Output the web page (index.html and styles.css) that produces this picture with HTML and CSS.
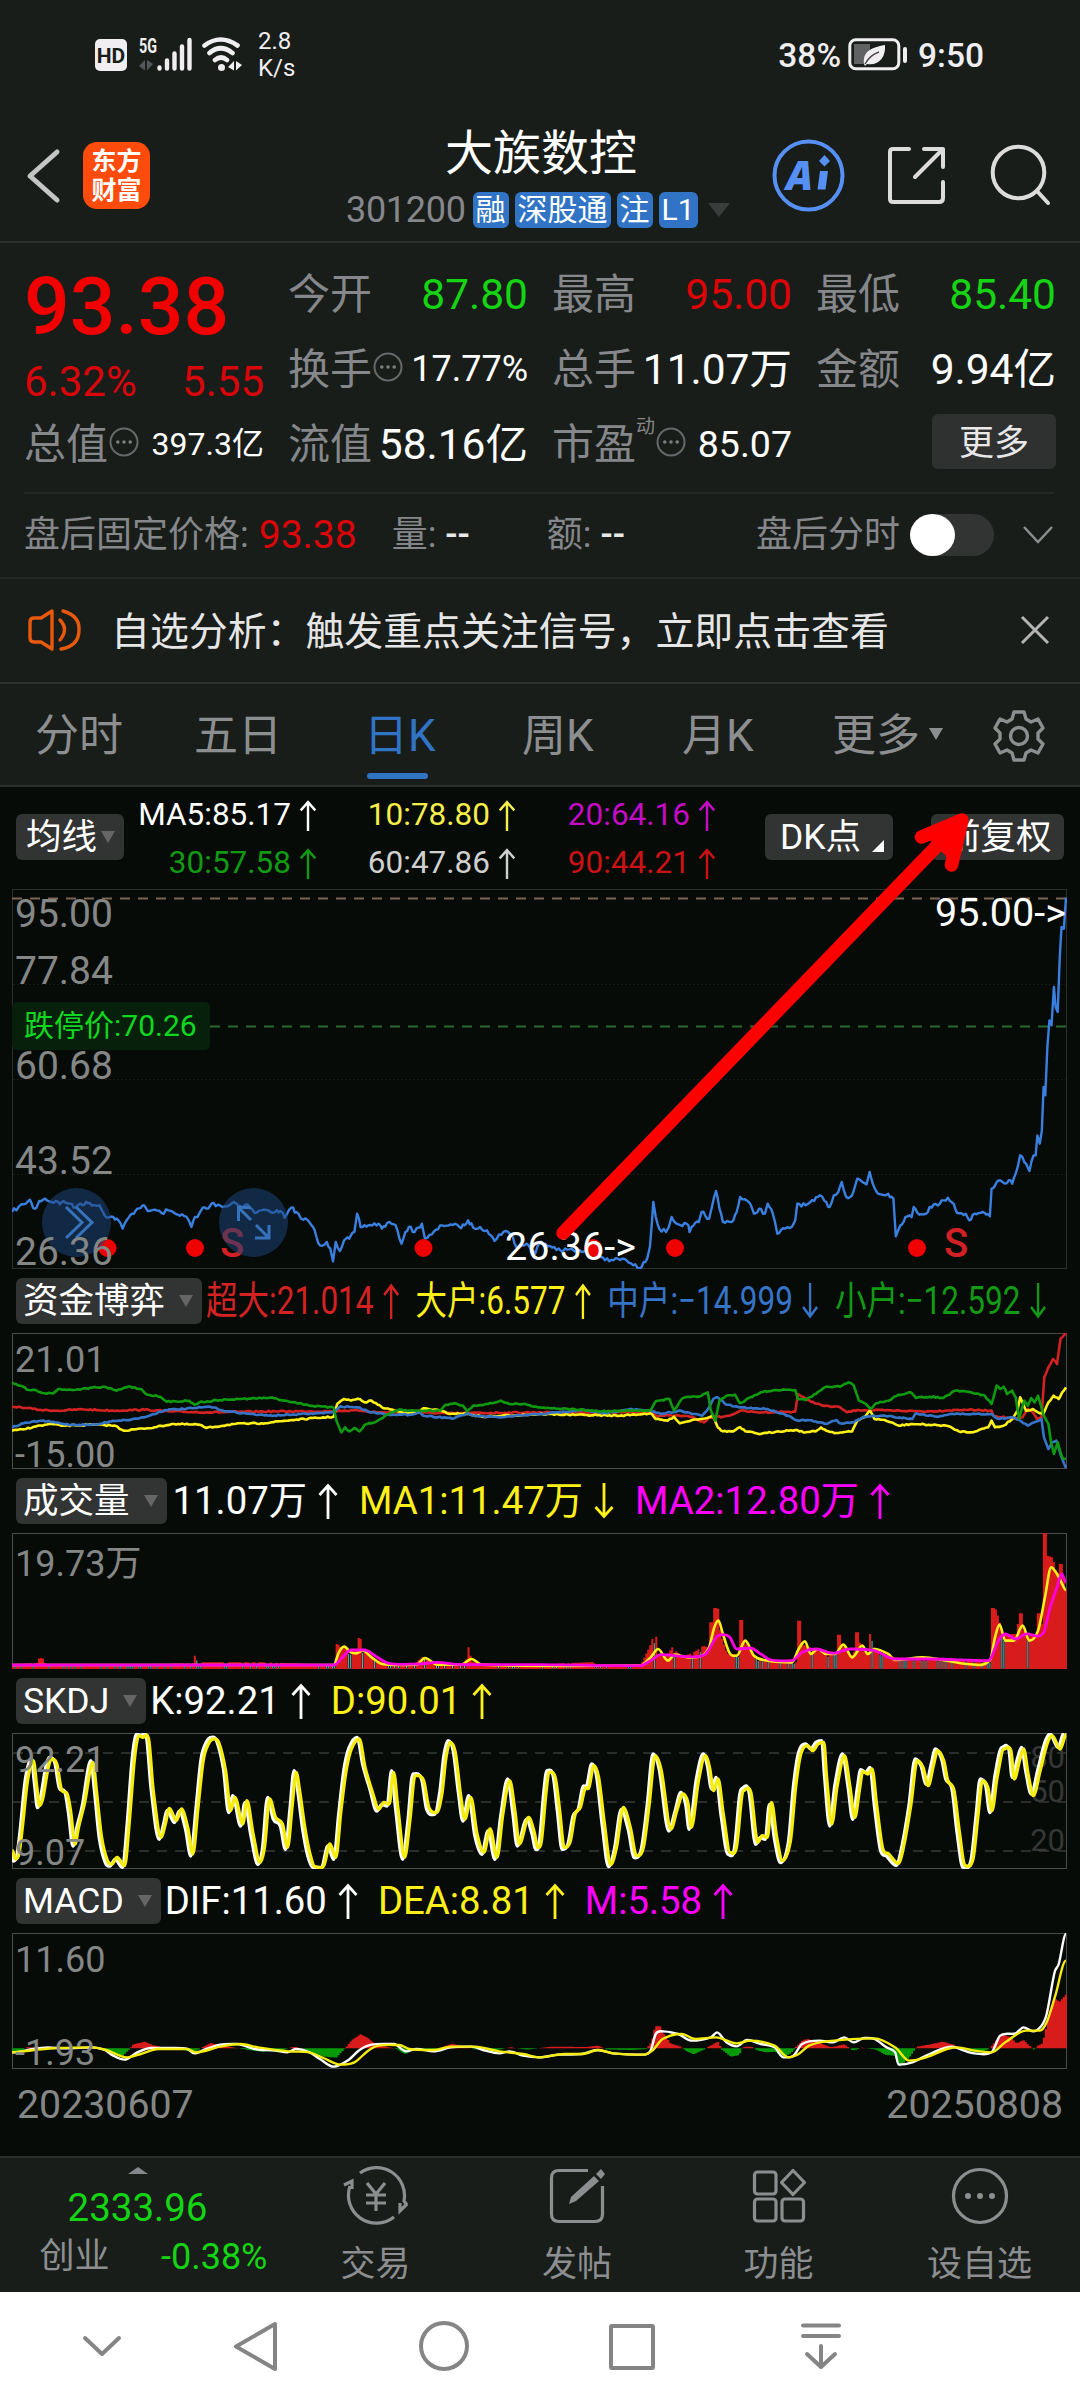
FILE: index.html
```html
<!DOCTYPE html>
<html lang="zh-CN">
<head>
  <meta charset="UTF-8">
  <meta name="viewport" content="width=device-width, initial-scale=1.0">
  <title>大族数控 301200</title>
  <link rel="stylesheet" href="styles.css">
</head>
<body>
  <svg class="defs" width="0" height="0">
    <symbol id="up" viewBox="0 0 20 36"><path d="M10 36V3M1.5 12L10 2.5L18.5 12" fill="none" stroke="currentColor" stroke-width="2.8"/></symbol>
    <symbol id="down" viewBox="0 0 20 36"><path d="M10 0V33M1.5 24L10 33.5L18.5 24" fill="none" stroke="currentColor" stroke-width="2.8"/></symbol>
    <symbol id="info" viewBox="0 0 30 30"><circle cx="15" cy="15" r="13.5" fill="none" stroke="#66686a" stroke-width="2"/><g fill="#7c7e80"><circle cx="8.8" cy="15" r="1.8"/><circle cx="15" cy="15" r="1.8"/><circle cx="21.2" cy="15" r="1.8"/></g></symbol>
  </svg>

  <div class="status-bar">
    <svg class="status-icons" width="158" height="44" viewBox="0 0 158 44">
      <rect x="0" y="6" width="32" height="32" rx="5" fill="#f0eef0"/>
      <text x="16" y="29.5" class="hd">HD</text>
      <text x="44" y="20" class="five-g" textLength="18" lengthAdjust="spacingAndGlyphs">5G</text>
      <path d="M44 33L50 27V37.500ZM52 27V37.500L58 31Z" fill="#55585a"/>
      <g stroke="#f0eef0" stroke-width="4.4" stroke-linecap="round">
        <path d="M64.500 34.500V35.500M72 27.500V35.500M79.500 20.500V35.500M87 13.500V35.500M94.500 7V35.500"/>
      </g>
      <g fill="none" stroke="#f0eef0" stroke-width="4.6" stroke-linecap="round">
        <path d="M109.500 12.500Q125.500 .500 142.500 12.500M114.500 20Q125.500 10.500 137.500 20M120 27Q126 22 132 27"/>
      </g>
      <circle cx="126.500" cy="34.500" r="3.500" fill="#f0eef0"/>
      <path d="M133 34L139 28V37.500ZM141 28V37.500L147 32Z" fill="#f0eef0"/>
    </svg>
    <div class="speed"><span>2.8</span><span>K/s</span></div>
    <div class="status-right">
      <span>38%</span>
      <svg width="60" height="34" viewBox="0 0 60 34">
        <rect x="1.800" y="1.800" width="49" height="29" rx="6" fill="none" stroke="#f0eef0" stroke-width="3"/>
        <rect x="6" y="6" width="16" height="20" fill="#606264"/>
        <path d="M16 26C15 15 20 10 37 7C38 19 31 28 19 26L17 28Z" fill="#f0eef0"/>
        <path d="M17 26Q22 17 31 14" stroke="#4a4c4c" stroke-width="1.500" fill="none"/>
        <rect x="55" y="9" width="4" height="16" rx="2" fill="#f0eef0"/>
      </svg>
      <span>9:50</span>
    </div>
  </div>

  <header class="header">
    <svg class="back" width="36" height="56" viewBox="0 0 36 56"><path d="M32 4L5 28L32 52" fill="none" stroke="#c4c4c4" stroke-width="5" stroke-linecap="round" stroke-linejoin="round"/></svg>
    <div class="logo"><span>东方</span><span>财富</span></div>
    <div class="title">
      <h1>大族数控</h1>
      <div class="code">
        <span>301200</span>
        <b>融</b><b>深股通</b><b>注</b><b>L1</b>
        <i class="tri tri-dark"></i>
      </div>
    </div>
    <svg class="actions" width="282" height="76" viewBox="0 0 282 76">
      <circle cx="38.500" cy="37.500" r="34" fill="none" stroke="#5790f5" stroke-width="4"/>
      <text x="16" y="51.500" class="ai">A</text>
      <path d="M50 33H58L55.500 51.500H47.500ZM54.500 17L60 23L54.500 28.500L49 23Z" fill="#5790f5"/>
      <g fill="none" stroke="#dcdcdc" stroke-width="4" stroke-linecap="round" stroke-linejoin="round">
        <path d="M139 11H123Q120 11 120 14V61Q120 64 123 64H169Q173 64 173 60V44M154 11H173V29M171 13L145 39"/>
        <circle cx="248.500" cy="34.500" r="25.800"/>
        <path d="M267 53L278 65"/>
      </g>
    </svg>
  </header>

  <section class="quote">
    <div class="col">
      <div class="price">93.38</div>
      <div class="change"><span>6.32%</span><span>5.55</span></div>
      <div class="cell"><label>总值</label><svg class="info" width="30" height="30"><use href="#info"/></svg><span class="s32">397.3亿</span></div>
    </div>
    <div class="col">
      <div class="cell"><label>今开</label><span class="green">87.80</span></div>
      <div class="cell"><label>换手</label><svg class="info" width="30" height="30"><use href="#info"/></svg><span class="s36">17.77%</span></div>
      <div class="cell"><label>流值</label><span>58.16亿</span></div>
    </div>
    <div class="col">
      <div class="cell"><label>最高</label><span class="red">95.00</span></div>
      <div class="cell"><label>总手</label><span>11.07万</span></div>
      <div class="cell"><label>市盈</label><sup>动</sup><svg class="info" width="30" height="30"><use href="#info"/></svg><span class="s38">85.07</span></div>
    </div>
    <div class="col">
      <div class="cell"><label>最低</label><span class="green">85.40</span></div>
      <div class="cell"><label>金额</label><span>9.94亿</span></div>
      <div class="cell"><button class="more">更多</button></div>
    </div>
  </section>

  <section class="after-hours">
    <span>盘后固定价格:</span><span class="red fixed">93.38</span>
    <span class="vol">量: <em>--</em></span>
    <span class="amt">额: <em>--</em></span>
    <span class="split">盘后分时</span>
    <div class="toggle"><i></i></div>
    <svg width="32" height="20" viewBox="0 0 32 20"><path d="M2 2L16 17L30 2" fill="none" stroke="#8c8e90" stroke-width="2.500"/></svg>
  </section>

  <section class="notice">
    <svg width="54" height="44" viewBox="0 0 54 44" fill="none" stroke="#e8590c" stroke-width="3.400" stroke-linejoin="round" stroke-linecap="round">
      <path d="M24 3L13 10H6Q2 10 2 14V30Q2 34 6 34H13L24 41Z"/>
      <path d="M32 12Q41 21 32 32M35 3Q52 8 51 22Q51 38 33 41"/>
    </svg>
    <span>自选分析：触发重点关注信号，立即点击查看</span>
    <svg width="32" height="32" viewBox="0 0 32 32"><path d="M3 3L29 29M29 3L3 29" stroke="#b4b4b4" stroke-width="3"/></svg>
  </section>

  <nav class="tabs">
    <span>分时</span><span>五日</span><span class="active">日K</span><span>周K</span><span>月K</span><span>更多<i class="tri tri-tab"></i></span>
    <svg width="54" height="54" viewBox="-27 -27 54 54" fill="none" stroke="#8c8e90" stroke-width="3.400" stroke-linejoin="round">
      <path d="M-5 -24H5L7 -17L12 -14L19 -17L24 -8L19 -3V3L24 8L19 17L12 14L7 17L5 24H-5L-7 17L-12 14L-19 17L-24 8L-19 3V-3L-24 -8L-19 -17L-12 -14L-7 -17Z"/>
      <circle r="8.500"/>
    </svg>
  </nav>

  <main class="charts">
    <div class="ma-row">
      <button class="pick">均线<i class="tri"></i></button>
      <div class="ma-grid">
        <span class="white">MA5:85.17<svg><use href="#up"/></svg></span>
        <span class="yellow2">10:78.80<svg><use href="#up"/></svg></span>
        <span class="purple">20:64.16<svg><use href="#up"/></svg></span>
        <span class="dgreen">30:57.58<svg><use href="#up"/></svg></span>
        <span class="silver">60:47.86<svg><use href="#up"/></svg></span>
        <span class="dred">90:44.21<svg><use href="#up"/></svg></span>
      </div>
      <button class="pick dk">DK点<i class="corner"></i></button>
      <button class="pick fq">前复权</button>
    </div>

    <svg class="panel" width="1080" height="380" viewBox="0 0 1080 380">
      <rect x="12.500" y=".500" width="1054" height="379" fill="none" stroke="#2b2e2c"/>
      <path d="M13 95.500H1066M13 190.500H1066M13 285.500H1066" stroke="#181b19" stroke-dasharray="2 2"/>
      <path d="M12 9.500H1066" stroke="#7d6554" stroke-width="2" stroke-dasharray="10 8"/>
      <path d="M210 137.500H1066" stroke="#2a6a2e" stroke-width="2" stroke-dasharray="10 8"/>
      <g class="axis big">
        <text x="15" y="38">95.00</text>
        <text x="15" y="95">77.84</text>
        <text x="15" y="190">60.68</text>
        <text x="15" y="285">43.52</text>
      </g>
      <rect x="12" y="113" width="198" height="48" rx="5" fill="#07200b"/>
      <text x="24" y="147" class="limit">跌停价:70.26</text>
      <svg id="kline" x="12" y="0" width="1055" height="380" viewBox="36 326 3063 1140" preserveAspectRatio="none"></svg>
      <g fill="#f00000">
        <circle cx="107.500" cy="359" r="9"/><circle cx="195" cy="359" r="9"/><circle cx="423.500" cy="359" r="9"/>
        <circle cx="593" cy="359" r="9"/><circle cx="675" cy="359" r="9"/><circle cx="917" cy="359" r="9"/>
      </g>
      <text x="220" y="368" class="sell">S</text>
      <text x="944" y="368" class="sell">S</text>
      <g fill="#1e4378" fill-opacity=".55"><circle cx="76.500" cy="333.500" r="34.500"/><circle cx="253.500" cy="333.500" r="34.500"/></g>
      <g fill="none" stroke="#3773bd" stroke-width="3">
        <path d="M66 318L82 333.500L66 349M76 318L92 333.500L76 349"/>
        <path d="M238.500 332V318.500H251M239 319L251 331M269 336V349H255M268 348L256 336"/>
      </g>
      <g class="axis big"><text x="15" y="376">26.36</text></g>
      <g class="mark"><text x="935" y="36.500">95.00-&gt;</text><text x="505" y="370.500">26.36-&gt;</text></g>
    </svg>

    <div class="legend squeezed">
      <button class="pick">资金博弈<i class="tri"></i></button>
      <div class="values">
        <span class="red2">超大:21.014<svg><use href="#up"/></svg></span>
        <span class="yellow">大户:6.577<svg><use href="#up"/></svg></span>
        <span class="blue">中户:−14.999<svg><use href="#down"/></svg></span>
        <span class="dgreen">小户:−12.592<svg><use href="#down"/></svg></span>
      </div>
    </div>
    <svg class="panel" width="1080" height="136" viewBox="0 0 1080 136">
      <rect x="12.500" y=".500" width="1054" height="135" class="frame"/>
      <svg id="funds" x="12" y="0" width="1055" height="136" viewBox="36 217 3063 408" preserveAspectRatio="none"></svg>
      <g class="axis"><text x="15" y="38.500">21.01</text><text x="15" y="134">-15.00</text></g>
    </svg>

    <div class="legend">
      <button class="pick">成交量<i class="tri"></i></button>
      <div class="values roomy">
        <span class="white">11.07万<svg><use href="#up"/></svg></span>
        <span class="yellow">MA1:11.47万<svg><use href="#down"/></svg></span>
        <span class="magenta">MA2:12.80万<svg><use href="#up"/></svg></span>
      </div>
    </div>
    <svg class="panel" width="1080" height="136" viewBox="0 0 1080 136">
      <rect x="12.500" y=".500" width="1054" height="135" class="frame"/>
      <svg id="volume" x="12" y="0" width="1055" height="136" viewBox="36 817 3063 408" preserveAspectRatio="none"></svg>
      <g class="axis"><text x="15" y="43">19.73万</text></g>
    </svg>

    <div class="legend">
      <button class="pick">SKDJ<i class="tri"></i></button>
      <div class="values">
        <span class="white">K:92.21<svg><use href="#up"/></svg></span>
        <span class="yellow">D:90.01<svg><use href="#up"/></svg></span>
      </div>
    </div>
    <svg class="panel" width="1080" height="136" viewBox="0 0 1080 136">
      <rect x="12.500" y=".500" width="1054" height="135" class="frame"/>
      <path d="M13 20H1066M13 69H1066M13 118H1066" stroke="#2a2d2b" stroke-width="2" stroke-dasharray="10 8"/>
      <g class="scale"><text x="1065" y="35">80</text><text x="1065" y="69">50</text><text x="1065" y="118">20</text></g>
      <svg id="skdj" x="12" y="0" width="1055" height="136" viewBox="36 157 3063 408" preserveAspectRatio="none"></svg>
      <g class="axis"><text x="15" y="38.500">92.21</text><text x="15" y="131.500">9.07</text></g>
    </svg>

    <div class="legend">
      <button class="pick">MACD<i class="tri"></i></button>
      <div class="values">
        <span class="white">DIF:11.60<svg><use href="#up"/></svg></span>
        <span class="yellow">DEA:8.81<svg><use href="#up"/></svg></span>
        <span class="magenta">M:5.58<svg><use href="#up"/></svg></span>
      </div>
    </div>
    <svg class="panel" width="1080" height="136" viewBox="0 0 1080 136">
      <rect x="12.500" y=".500" width="1054" height="135" class="frame"/>
      <svg id="macd" x="12" y="0" width="1055" height="136" viewBox="36 757 3063 408" preserveAspectRatio="none"></svg>
      <g class="axis"><text x="15" y="38.500">11.60</text><text x="15" y="131.500">-1.93</text></g>
    </svg>

    <div class="dates"><span>20230607</span><span>20250808</span></div>

    <svg class="pointer" width="440" height="450" viewBox="0 0 440 450">
      <path d="M18 433L417 20M417 20L376.500 37M417 20L406.500 65" fill="none" stroke="#ff0000" stroke-width="13.500" stroke-linecap="round"/>
      <path d="M417 20L385 40L405 60Z" fill="#ff0000"/>
    </svg>
  </main>

  <footer class="bottom">
    <div class="index">
      <i class="tri tri-up"></i>
      <strong>2333.96</strong>
      <div><span>创业</span><em>-0.38%</em></div>
    </div>
    <div class="item">
      <svg width="66" height="60" viewBox="-33 -30 66 60" fill="none" stroke="#8c8e90" stroke-width="3.200">
        <path d="M-16 -23A28 28 0 0 1 28 5L31 9M-26 -10A28 28 0 0 0 18 21M-32 -11L-24 -15V-7M31 8L24 15V7"/>
        <path d="M-9 -13L0 -2L9 -13M0 -2V15M-10 -1H10M-10 7H10"/>
      </svg>
      <span>交易</span>
    </div>
    <div class="item">
      <svg width="66" height="60" viewBox="-33 -30 66 60" fill="none" stroke="#8c8e90" stroke-width="3.200">
        <path d="M11 -25.500H-18Q-25.500 -25.500 -25.500 -18V18Q-25.500 25.500 -18 25.500H18Q25.500 25.500 25.500 18V-10"/>
        <path d="M-8 8L-6 1L17 -20L22 -15L-1 5ZM19 -22L24 -27L28 -22L24 -17Z" fill="#8c8e90" stroke="none"/>
      </svg>
      <span>发帖</span>
    </div>
    <div class="item">
      <svg width="66" height="60" viewBox="-33 -30 66 60" fill="none" stroke="#8c8e90" stroke-width="3.200" stroke-linejoin="round">
        <rect x="-24.500" y="-24" width="21.500" height="22" rx="3"/><rect x="-24.500" y="3" width="21.500" height="22" rx="3"/><rect x="3" y="3" width="21.500" height="22" rx="3"/>
        <path d="M14 -25.500L25.500 -13.500L14 -1.500L2.500 -13.500Z"/>
      </svg>
      <span>功能</span>
    </div>
    <div class="item">
      <svg width="66" height="60" viewBox="-33 -30 66 60">
        <circle r="26.500" fill="none" stroke="#8c8e90" stroke-width="3.200"/>
        <g fill="#8c8e90"><circle cx="-12" r="3"/><circle r="3"/><circle cx="12" r="3"/></g>
      </svg>
      <span>设自选</span>
    </div>
  </footer>

  <div class="system-nav">
    <svg width="1080" height="108" viewBox="0 0 1080 108" fill="none" stroke="#858585" stroke-width="4" stroke-linecap="round" stroke-linejoin="round">
      <path d="M85 46L102 62L119 46"/>
      <path d="M275 32V77L236 54.500Z"/>
      <circle cx="444" cy="54" r="23"/>
      <rect x="611" y="34" width="42" height="42" rx="1"/>
      <path d="M803 33.500H839M803 44H839M821 54V74M807 62L821 75L835 62"/>
    </svg>
  </div>

  <script src="script.js"></script>
</body>
</html>
```

FILE: styles.css
```css
* {
  box-sizing: border-box;
}
body {
  margin: 0;
  width: 1080px;
  height: 2400px;
  overflow: hidden;
  background: #191d1a;
  color: #fff;
  font-family: Roboto, "Noto Sans CJK SC", sans-serif;
}
button {
  font-family: inherit;
  border: none;
  color: #fff;
  padding: 0;
}
em, i {
  font-style: normal;
}
.defs {
  display: block;
}

/* status bar */
.status-bar {
  height: 112px;
  padding: 0 96px 2px 95px;
  display: flex;
  align-items: center;
  color: #f0eef0;
}
.speed {
  display: flex;
  flex-direction: column;
  margin-left: 5px;
  font-size: 24px;
  line-height: 27px;
}
.status-right {
  display: flex;
  align-items: center;
  gap: 7px;
  margin-left: auto;
  font-size: 33.5px;
  font-weight: 500;
}
.status-right svg {
  margin-right: 3px;
}
.hd {
  font-size: 21px;
  font-weight: 700;
  text-anchor: middle;
  fill: #191d1a;
}
.five-g {
  font-size: 20px;
  font-weight: 700;
  fill: #f0eef0;
}

/* header */
.header {
  height: 131px;
  display: flex;
  align-items: center;
  padding: 0 28px 2px 25px;
  border-bottom: 2px solid #2b2f2c;
}
.logo {
  width: 67px;
  height: 67px;
  margin-left: 22px;
  border-radius: 14px;
  background: #ff4b0b;
  display: flex;
  flex-direction: column;
  align-items: center;
  justify-content: center;
  font-size: 25px;
  font-weight: 700;
  line-height: 29px;
}
.title {
  flex: 1;
  padding: 4px 0 0 196px;
  display: flex;
  flex-direction: column;
}
.title h1 {
  margin: 0 0 0 99px;
  font-size: 48px;
  font-weight: 400;
  line-height: 64px;
}
.code {
  display: flex;
  align-items: center;
  height: 48px;
  gap: 6px;
  color: #85878a;
  font-size: 36px;
}
.code span {
  margin-right: 1px;
  letter-spacing: -.3px;
}
.code b {
  height: 36px;
  padding: 0 3px;
  border-radius: 6px;
  background: #3174c6;
  color: #fff;
  font-size: 30px;
  font-weight: 400;
  line-height: 35px;
}
.ai {
  font-family: "Open Sans", sans-serif;
  font-size: 40px;
  font-weight: 800;
  font-style: italic;
  fill: #5790f5;
}

/* triangles */
.tri {
  display: inline-block;
  border: 7.5px solid transparent;
  border-top: 12px solid #666;
  border-bottom: 0;
}
.tri-dark {
  margin-left: 4px;
  border-width: 14px 11px 0;
  border-top-color: #3a3d3b;
}
.tri-tab {
  margin-left: 9px;
  margin-bottom: 11px;
  border-top-color: #8c8e90;
}
.tri-up {
  border-width: 0 10.5px 7px;
  border-bottom: 7px solid #85878a;
}

/* quote */
.quote {
  height: 249px;
  padding: 14px 26px 0 24px;
  display: grid;
  grid-template-columns: repeat(4, 240px);
  column-gap: 24px;
}
.price {
  height: 98px;
  font-size: 80.5px;
  font-weight: 500;
  line-height: 100px;
  color: #f20000;
}
.change {
  display: flex;
  justify-content: space-between;
  height: 52px;
  font-size: 42px;
  line-height: 54px;
  color: #d8060a;
}
.cell {
  display: flex;
  align-items: center;
  height: 75px;
  font-size: 42.5px;
  line-height: 77px;
  white-space: nowrap;
}
.cell label {
  color: #85878a;
  font-size: 42px;
}
.cell span, .cell .more {
  margin-left: auto;
}
.cell .s32 { font-size: 32px; }
.cell .s36 { font-size: 36px; }
.cell .s38 { font-size: 37.5px; }
.cell sup {
  align-self: flex-start;
  margin-top: -19px;
  font-size: 19px;
  color: #85878a;
}
.info {
  margin: -5px 0 0 1px;
  flex: none;
}
.more {
  width: 124px;
  height: 55px;
  margin-top: -6px;
  padding-bottom: 4px;
  border-radius: 6px;
  background: #2f3030;
  color: #e8e8e8;
  font-size: 35px;
}
.green { color: #14d414; }
.red { color: #dc0408; }

/* after hours */
.after-hours {
  height: 85px;
  margin: 0 26px 0 24px;
  padding-bottom: 2px;
  border-top: 2px solid #242825;
  display: flex;
  align-items: center;
  font-size: 36px;
  line-height: 42px;
  color: #85878a;
}
.after-hours .fixed {
  margin-left: 10px;
  font-size: 39px;
}
.after-hours em {
  color: #e8e8e8;
  font-weight: 500;
}
.vol { margin-left: 35px; }
.amt { margin-left: 77px; }
.split { margin-left: auto; }
.toggle {
  width: 84px;
  height: 42px;
  margin: 0 28px 0 10px;
  border-radius: 21px;
  background: #323333;
}
.toggle i {
  display: block;
  width: 45px;
  height: 42px;
  border-radius: 50%;
  background: #fff;
}

/* notice */
.notice {
  height: 107px;
  padding: 0 29px 2px 28px;
  border-top: 2px solid #242825;
  border-bottom: 2px solid #2e322f;
  display: flex;
  align-items: center;
  font-size: 38.9px;
  color: #e6e6e6;
}
.notice span {
  margin: -4px auto 0 29px;
}

/* tabs */
.tabs {
  height: 103px;
  padding: 0 35px;
  display: grid;
  grid-template-columns: 159px 170px 158px 160px 150px 1fr 54px;
  align-items: center;
  border-bottom: 2px solid #2b2f2c;
  font-size: 44px;
  line-height: 105px;
  color: #8c8e90;
}
.tabs .active {
  position: relative;
  color: #3174c6;
}
.tabs .active::after {
  content: "";
  position: absolute;
  left: 3px;
  bottom: 10px;
  width: 61px;
  height: 6px;
  border-radius: 3px;
  background: #3174c6;
}
.tabs > svg {
  margin: -1px 0 0 1px;
}

/* charts */
.charts {
  position: relative;
  height: 1369px;
  background: #060b08;
}
.pick {
  flex: none;
  height: 46px;
  border-radius: 6px;
  background: #323333;
  display: flex;
  align-items: center;
  font-size: 35.5px;
  line-height: 46px;
  padding: 0 9px 0 7px;
  white-space: nowrap;
}
.pick .tri {
  margin-left: 14px;
}
.ma-row {
  height: 102px;
  padding: 6px 15px 0 16px;
  display: flex;
  align-items: flex-start;
}
.ma-row .pick {
  margin-top: 21px;
  padding-left: 10px;
}
.ma-row .pick .tri {
  margin-left: 4px;
}
.ma-grid {
  display: grid;
  grid-template-columns: 193px 199px 200px;
  grid-auto-rows: 48px;
  justify-items: end;
  margin-top: -2px;
  font-size: 31.5px;
  line-height: 48px;
}
.ma-grid span {
  display: flex;
  align-items: center;
}
.ma-grid svg {
  width: 18px;
  height: 31px;
  margin-left: 8px;
}
.ma-row .dk {
  width: 128px;
  padding: 0 0 0 15px;
  margin-left: 49px;
}
.corner {
  align-self: flex-end;
  margin: 0 0 8px 11px;
  border-left: 12px solid transparent;
  border-bottom: 12px solid #fff;
}
.ma-row .fq {
  width: 133px;
  margin-left: 38px;
  padding-left: 14px;
}
.panel {
  display: block;
}
.frame {
  fill: none;
  stroke: #4a4d4b;
}
.legend {
  height: 64px;
  padding-left: 16px;
  display: flex;
  align-items: center;
}
.values {
  display: flex;
  gap: 20px;
  margin-left: 4px;
  font-size: 38.3px;
  line-height: 64px;
}
.values span {
  display: flex;
  align-items: center;
  white-space: nowrap;
}
.values svg {
  flex: none;
  width: 20px;
  height: 36px;
  margin-left: 11px;
}
.values.roomy {
  margin-left: 6px;
  gap: 21px;
}
.squeezed .values {
  transform: scaleX(.823);
  transform-origin: 0 50%;
  margin-left: 4px;
}
.axis {
  font-size: 36px;
  fill: #858786;
}
.axis.big {
  font-size: 39px;
}
.scale {
  font-size: 31px;
  text-anchor: end;
  fill: #343735;
}
.mark {
  font-size: 39.5px;
  fill: #fff;
}
.limit {
  font-size: 30px;
  fill: #10d820;
}
.sell {
  font-size: 40px;
  font-weight: 500;
  fill: #d22024;
}
.line {
  fill: none;
  stroke-linejoin: round;
  vector-effect: non-scaling-stroke;
}
.dates {
  padding: 0 17px;
  display: flex;
  justify-content: space-between;
  font-size: 39.3px;
  line-height: 73px;
  color: #858786;
}
/* lies over the chart, from the low to the price adjust button */
.pointer {
  position: absolute;
  left: 545px;
  top: 13px;
}
.white { color: #fff; }
.silver { color: #d0d0d0; }
.yellow { color: #fff01a; }
.yellow2 { color: #f6ee4a; }
.purple { color: #c40cc4; }
.magenta { color: #ff00ff; }
.dgreen { color: #129a14; }
.dred { color: #cc1214; }
.red2 { color: #d42222; }
.blue { color: #3674c8; }

/* bottom bar */
.bottom {
  height: 136px;
  border-top: 2px solid #2b2f2c;
  display: grid;
  grid-template-columns: 275px 201px 202px 201px 201px;
  color: #8c8e90;
}
.index {
  display: flex;
  flex-direction: column;
  align-items: center;
  padding-top: 9px;
}
.index strong {
  font-size: 38.5px;
  font-weight: 400;
  line-height: 44px;
  margin-top: 12px;
  color: #14d414;
}
.index div {
  display: flex;
  width: 228px;
  margin-left: 32px;
  justify-content: space-between;
  font-size: 35px;
  line-height: 54px;
}
.index em {
  font-size: 36px;
  color: #14d414;
}
.item {
  display: flex;
  flex-direction: column;
  align-items: center;
  padding-top: 8px;
}
.item span {
  font-size: 35px;
  line-height: 50px;
  margin-top: 14px;
}
.system-nav {
  height: 108px;
  background: #fff;
}
.system-nav svg {
  display: block;
}
```

FILE: script.js
```js
// x,y pairs in the units of each plot's viewBox
const price = "36,1295 55,1280 70,1272 88,1258 97,1282 107,1282 115,1262 132,1255 150,1265 163,1262 175,1272 185,1262 205,1270 215,1282 235,1270 262,1268 278,1275 290,1275 300,1295 315,1312 330,1310 345,1320 357,1345 370,1318 385,1300 400,1285 415,1275 430,1292 450,1288 470,1298 490,1290 510,1300 530,1302 548,1318 557,1340 567,1310 575,1310 590,1282 605,1285 615,1270 640,1275 660,1278 680,1265 700,1278 720,1272 740,1298 760,1290 780,1290 800,1295 815,1292 828,1312 847,1282 862,1295 875,1315 895,1320 910,1340 920,1370 930,1395 950,1385 960,1405 968,1443 976,1385 988,1412 1000,1380 1015,1375 1030,1355 1038,1300 1048,1340 1070,1335 1100,1330 1110,1345 1125,1328 1145,1332 1155,1350 1167,1390 1178,1355 1188,1340 1205,1355 1215,1342 1226,1330 1235,1375 1255,1362 1285,1335 1310,1332 1335,1340 1350,1335 1360,1320 1375,1342 1395,1340 1415,1350 1437,1382 1450,1362 1470,1352 1490,1370 1500,1400 1530,1390 1555,1420 1568,1385 1585,1390 1610,1400 1630,1412 1660,1405 1690,1415 1725,1412 1745,1430 1770,1443 1795,1435 1820,1440 1840,1455 1863,1462 1870,1445 1880,1435 1888,1400 1898,1265 1905,1310 1915,1345 1935,1355 1943,1340 1951,1310 1965,1330 2000,1335 2003,1355 2015,1335 2030,1325 2038,1295 2060,1315 2068,1280 2080,1232 2090,1285 2100,1325 2125,1325 2140,1295 2150,1250 2175,1265 2190,1300 2205,1285 2222,1300 2230,1270 2245,1300 2258,1360 2280,1345 2300,1340 2310,1320 2316,1270 2340,1275 2365,1262 2381,1245 2395,1262 2410,1280 2422,1245 2435,1235 2445,1205 2458,1250 2475,1245 2490,1195 2505,1205 2517,1212 2526,1175 2535,1210 2550,1240 2580,1240 2595,1255 2602,1368 2615,1335 2630,1310 2648,1310 2654,1280 2665,1298 2690,1300 2700,1280 2730,1270 2740,1260 2753,1252 2770,1270 2780,1298 2805,1300 2815,1320 2830,1300 2860,1298 2875,1308 2880,1225 2895,1205 2905,1200 2925,1208 2935,1200 2940,1210 2950,1180 2963,1125 2975,1145 2990,1172 3002,1125 3008,1125 3013,1065 3020,1090 3026,1050 3031,920 3036,945 3042,800 3048,720 3054,735 3061,620 3066,680 3072,695 3078,530 3083,440 3090,445 3096,352";

const funds = {
  "#d42222": "36,438 80,442 120,448 170,450 240,446 330,450 420,447 490,452 600,455 800,452 970,452 985,450 1050,450 1100,455 1200,455 1300,458 1568,455 1700,455 1895,455 1905,465 1960,465 2010,468 2030,480 2045,485 2060,470 2100,468 2120,465 2150,450 2200,455 2310,453 2318,400 2345,418 2390,435 2440,440 2460,455 2490,448 2600,450 2700,452 2800,447 2880,450 2885,465 2950,475 2970,470 2985,445 3000,455 3012,475 3025,470 3033,350 3045,320 3058,295 3070,310 3080,235 3096,217",
  "#fff01a": "36,510 70,506 100,498 150,490 180,495 280,492 335,495 360,510 450,500 500,490 580,492 600,502 680,490 760,488 850,478 970,468 980,430 1000,415 1020,420 1040,414 1060,425 1080,420 1110,440 1150,450 1190,458 1215,455 1230,443 1280,450 1300,458 1360,460 1400,468 1450,466 1568,460 1700,463 1800,465 1890,458 1905,475 1940,480 1958,468 1975,488 2010,478 2060,470 2070,463 2085,500 2100,512 2130,512 2150,500 2165,512 2210,520 2260,512 2310,508 2340,515 2370,512 2385,500 2400,510 2430,517 2475,512 2490,480 2515,465 2527,450 2540,475 2570,478 2610,495 2650,490 2750,495 2785,512 2820,515 2870,500 2880,480 2890,500 2915,495 2940,475 2955,450 2963,410 2980,450 3000,445 3015,455 3030,460 3045,425 3060,405 3075,415 3085,395 3096,380",
  "#3674c8": "36,500 70,488 120,480 160,485 200,492 280,492 330,480 370,478 420,470 480,448 560,443 610,438 660,452 730,460 780,465 850,462 970,455 990,437 1040,440 1080,455 1150,463 1190,462 1220,455 1230,465 1320,473 1360,458 1380,466 1450,470 1568,460 1660,452 1700,448 1750,458 1830,445 1895,452 1920,460 1975,450 1990,455 2040,465 2060,440 2072,415 2085,410 2110,432 2150,440 2230,445 2290,465 2318,480 2345,478 2400,490 2430,478 2440,488 2480,485 2510,468 2570,465 2650,475 2660,458 2720,468 2760,460 2880,460 2900,475 2940,470 2960,478 2985,495 3025,475 3032,530 3045,565 3055,545 3068,540 3080,580 3096,622",
  "#0f9a10": "36,365 60,375 85,388 105,388 130,398 155,398 170,385 210,388 280,380 310,380 340,390 375,377 410,385 425,400 465,408 485,423 550,420 565,432 580,425 640,418 700,415 785,411 830,420 870,428 910,436 970,441 978,480 992,515 1003,500 1015,512 1030,502 1045,512 1060,492 1090,485 1130,460 1160,447 1190,450 1280,450 1295,432 1325,428 1345,435 1358,452 1375,435 1430,428 1455,420 1480,430 1520,430 1568,440 1650,445 1750,452 1850,450 1890,448 1905,422 1945,415 1958,450 1980,415 2000,408 2030,408 2056,395 2065,450 2078,480 2090,420 2110,405 2135,402 2150,428 2180,410 2210,395 2250,388 2310,388 2318,415 2340,418 2370,400 2400,378 2440,378 2465,365 2480,375 2495,420 2515,430 2528,445 2545,428 2580,420 2610,402 2645,395 2660,412 2700,408 2740,412 2775,390 2820,395 2860,405 2880,430 2895,375 2905,385 2915,378 2925,400 2940,390 2950,410 2960,475 2975,420 2985,435 2995,412 3005,425 3015,405 3030,460 3045,490 3052,540 3061,580 3072,545 3085,590 3096,595"
};

const volumeTops = "36,1210 105,1208 112,1192 122,1192 130,1210 415,1210 558,1208 561,1185 568,1185 572,1205 760,1205 970,1212 972,1150 980,1150 985,1158 1000,1165 1020,1172 1034,1165 1037,1132 1045,1132 1048,1162 1080,1190 1110,1205 1150,1212 1200,1210 1230,1185 1250,1202 1300,1212 1352,1212 1354,1160 1363,1160 1365,1202 1400,1212 1568,1211 1720,1204 1730,1213 1860,1210 1888,1150 1894,1128 1904,1128 1908,1180 1930,1190 1950,1160 1980,1190 2020,1170 2040,1155 2055,1160 2058,1085 2067,1085 2069,1042 2080,1042 2085,1045 2090,1120 2110,1180 2143,1180 2145,1078 2155,1078 2157,1140 2180,1170 2200,1195 2310,1205 2312,1080 2322,1080 2324,1150 2350,1160 2400,1180 2427,1165 2429,1122 2438,1122 2443,1150 2470,1185 2480,1170 2482,1115 2491,1115 2497,1160 2520,1180 2523,1120 2533,1120 2535,1160 2580,1190 2700,1195 2876,1202 2878,1042 2888,1042 2893,1055 2910,1120 2950,1120 2957,1058 2967,1058 2970,1110 3000,1130 3008,1115 3010,1058 3020,1058 3025,1110 3027,817 3037,817 3040,885 3052,890 3060,910 3068,950 3072,910 3084,910 3088,980 3096,990";
const volumeMa1 = "36,1213 970,1213 985,1175 1000,1158 1020,1175 1035,1178 1055,1170 1080,1190 1110,1210 1210,1212 1235,1192 1270,1212 1340,1212 1370,1195 1400,1212 1860,1215 1890,1190 1912,1165 1940,1200 1960,1182 2000,1190 2040,1185 2060,1160 2075,1100 2087,1080 2100,1120 2120,1178 2140,1185 2165,1140 2190,1185 2230,1200 2300,1205 2320,1165 2338,1142 2355,1180 2375,1165 2400,1180 2425,1180 2450,1152 2475,1190 2505,1155 2520,1180 2540,1165 2580,1180 2600,1198 2680,1190 2750,1200 2810,1210 2875,1200 2890,1130 2903,1092 2920,1140 2945,1140 2970,1095 2990,1140 3015,1110 3035,1010 3053,920 3070,940 3085,970 3096,988";
const volumeMa2 = "36,1213 970,1213 1000,1185 1020,1168 1060,1168 1090,1185 1130,1208 1220,1210 1270,1205 1330,1211 1568,1212 1860,1215 1890,1200 1920,1182 2000,1188 2050,1180 2080,1130 2100,1122 2120,1130 2140,1165 2180,1162 2210,1180 2240,1198 2300,1200 2330,1175 2370,1165 2420,1178 2470,1165 2540,1170 2600,1195 2700,1195 2870,1200 2900,1140 2920,1120 2950,1135 2980,1120 3030,1118 3050,1040 3070,980 3084,940 3096,965";

const skd = "36,510 45,535 55,520 65,440 80,300 97,240 107,320 115,375 125,350 140,260 150,235 165,250 178,325 195,340 205,390 218,490 228,440 245,370 270,245 280,330 295,470 312,540 325,550 340,530 362,555 375,430 390,240 403,165 415,170 432,178 445,330 468,470 480,430 492,383 512,420 527,385 545,440 560,520 575,380 590,240 605,190 620,175 635,185 655,270 670,390 682,350 705,430 717,360 735,460 755,545 768,500 783,355 800,410 820,430 835,500 848,380 860,275 870,330 885,440 900,520 915,558 940,555 958,490 975,530 990,390 1005,270 1020,205 1043,175 1060,260 1080,330 1100,385 1115,365 1130,370 1143,275 1155,380 1175,530 1190,420 1205,285 1230,300 1245,380 1268,395 1283,340 1295,230 1307,185 1322,215 1337,340 1350,415 1367,350 1385,460 1405,515 1423,445 1443,530 1460,400 1480,300 1495,390 1508,490 1535,410 1550,450 1562,500 1572,480 1585,340 1594,275 1612,290 1625,390 1638,500 1655,485 1670,400 1685,380 1698,325 1710,320 1724,255 1738,290 1755,430 1773,552 1790,500 1810,380 1830,440 1848,525 1868,500 1885,370 1902,225 1920,270 1948,445 1965,390 1983,340 1997,365 2007,440 2028,300 2048,225 2060,260 2072,330 2085,295 2100,400 2120,515 2138,500 2158,330 2180,335 2200,485 2213,465 2228,470 2240,365 2255,470 2272,540 2295,480 2310,320 2325,220 2345,195 2360,210 2375,190 2392,185 2400,290 2415,430 2430,320 2452,225 2468,320 2482,410 2495,330 2505,272 2520,280 2532,265 2545,370 2562,500 2580,520 2608,548 2625,490 2645,370 2663,240 2680,260 2695,315 2710,255 2722,210 2740,240 2752,300 2770,330 2785,450 2802,555 2825,535 2840,400 2852,300 2868,320 2880,390 2895,290 2915,205 2935,210 2945,295 2960,240 2972,205 2985,280 3000,345 3020,270 3040,190 3055,165 3078,205 3096,160";

const macdHist = "36,-12 60,-10 75,3 140,2 200,4 260,2 300,-3 330,-18 355,-22 372,-5 385,12 420,20 440,10 470,3 530,-3 560,-14 585,3 610,16 640,8 680,2 720,-5 760,-10 820,-5 850,5 870,1 900,-10 940,-25 975,-28 1000,0 1020,25 1045,42 1065,32 1090,12 1120,5 1150,-2 1175,-18 1200,-3 1260,-5 1285,5 1310,14 1350,5 1375,-3 1430,-8 1480,3 1530,-4 1600,5 1700,4 1735,8 1760,-3 1830,-5 1875,-2 1890,20 1900,66 1915,66 1925,45 1945,15 1975,5 1990,-8 2012,-18 2040,-5 2060,8 2083,20 2095,-5 2120,-25 2145,-20 2155,4 2180,5 2195,-5 2220,-12 2250,-10 2270,-28 2295,-15 2310,5 2330,25 2345,28 2380,15 2410,3 2450,12 2475,-7 2500,2 2540,-3 2570,-20 2595,-22 2612,-55 2640,-25 2660,5 2700,12 2735,20 2770,10 2790,-5 2840,-12 2870,-2 2880,10 2903,42 2930,35 2950,15 2970,25 2985,10 3000,-4 3012,8 3025,15 3035,60 3045,110 3060,150 3075,140 3096,165";
const dif = "36,1115 65,1112 95,1105 140,1100 190,1103 270,1100 305,1108 330,1125 362,1137 400,1115 440,1102 500,1102 545,1105 565,1118 600,1105 640,1092 690,1090 740,1105 800,1110 835,1115 860,1105 900,1115 930,1135 970,1158 1010,1140 1045,1108 1080,1092 1145,1090 1180,1112 1210,1105 1260,1112 1310,1100 1370,1098 1410,1110 1450,1118 1480,1112 1520,1125 1568,1130 1620,1122 1690,1120 1735,1108 1780,1118 1870,1122 1890,1110 1905,1060 1925,1052 1970,1060 2010,1080 2065,1070 2083,1055 2110,1085 2140,1097 2170,1078 2210,1090 2250,1100 2275,1130 2305,1125 2330,1090 2380,1080 2420,1085 2452,1070 2480,1085 2510,1072 2540,1075 2575,1100 2600,1115 2610,1152 2650,1145 2700,1120 2765,1098 2800,1110 2830,1118 2880,1115 2905,1065 2950,1058 2973,1040 3000,1052 3025,1035 3040,1000 3063,875 3075,850 3096,760";
const dea = "36,1115 100,1108 170,1102 270,1100 310,1108 370,1130 410,1120 460,1105 545,1105 570,1115 640,1098 700,1090 750,1100 840,1112 900,1115 940,1132 990,1152 1030,1145 1070,1110 1100,1095 1160,1093 1190,1105 1260,1108 1310,1098 1380,1098 1450,1112 1520,1120 1568,1130 1640,1120 1690,1120 1740,1108 1780,1118 1870,1122 1895,1110 1925,1075 1980,1060 2020,1075 2080,1070 2140,1088 2180,1080 2250,1095 2290,1130 2320,1120 2350,1095 2400,1082 2540,1073 2600,1100 2640,1140 2690,1130 2750,1105 2780,1100 2830,1110 2880,1115 2920,1085 2980,1050 3020,1050 3040,1025 3065,945 3096,840";

let seed = 7;
function random() {
  seed = (seed * 16807) % 2147483647;
  return seed / 2147483647;
}

function parse(text) {
  return text.split(" ").map(p => p.split(",").map(Number));
}

function addPath(id, d, attrs) {
  const path = document.createElementNS("http://www.w3.org/2000/svg", "path");
  path.setAttribute("d", d);
  for (const key in attrs) path.setAttribute(key, attrs[key]);
  document.getElementById(id).appendChild(path);
}

function addLine(id, d, color, width) {
  addPath(id, d, { class: "line", stroke: color, "stroke-width": width });
}

// one point per trading day between the given ones, with a little daily noise
function jagged(points, noise) {
  let d = "M" + points[0];
  for (let i = 1; i < points.length; i++) {
    const [x0, y0] = points[i - 1];
    const [x1, y1] = points[i];
    const steps = Math.max(1, Math.round((x1 - x0) / 6));
    for (let s = 1; s <= steps; s++) {
      const t = s / steps;
      const shift = s === steps ? 0 : (random() - .5) * noise;
      d += "L" + (x0 + (x1 - x0) * t).toFixed(1) + "," + (y0 + (y1 - y0) * t + shift).toFixed(1);
    }
  }
  return d;
}

function smooth(points, dx) {
  let d = "M" + (points[0][0] + dx) + "," + points[0][1];
  for (let i = 1; i < points.length; i++) {
    const [x0, y0] = points[i - 1];
    const [x1, y1] = points[i];
    const before = points[i - 2] || points[i - 1];
    const after = points[i + 1] || points[i];
    const k = (x1 - x0) / 3;
    const m0 = slope(before, points[i - 1], points[i]);
    const m1 = slope(points[i - 1], points[i], after);
    d += "C" + [x0 + k + dx, y0 + m0 * k, x1 - k + dx, y1 - m1 * k, x1 + dx, y1].map(n => n.toFixed(1));
  }
  return d;
}

// flat at local highs and lows so the curve never overshoots
function slope(a, b, c) {
  if ((b[1] - a[1]) * (c[1] - b[1]) <= 0) return 0;
  return (c[1] - a[1]) / (c[0] - a[0]);
}

function valueAt(points, x) {
  for (let i = 1; i < points.length; i++) {
    if (x <= points[i][0]) {
      const t = (x - points[i - 1][0]) / (points[i][0] - points[i - 1][0]);
      return points[i - 1][1] + (points[i][1] - points[i - 1][1]) * t;
    }
  }
  return points[points.length - 1][1];
}

addLine("kline", jagged(parse(price), 12), "#3a80e0", 2.4);

for (const color in funds) addLine("funds", jagged(parse(funds[color]), 4), color, 2.6);

const tops = parse(volumeTops);
let upBars = "", downBars = "";
for (let x = 36; x < 3096; x += 5.8) {
  const top = valueAt(tops, x);
  const falling = random() < .25 && top > 1100;
  const y = falling ? top + (1225 - top) * .2 : top;
  if (falling) downBars += "M" + (x + 3).toFixed(1) + ",1222V" + y.toFixed(1);
  else upBars += "M" + x.toFixed(1) + ",1225V" + y.toFixed(1) + "h6V1225Z";
}
addPath("volume", upBars, { fill: "#d81c1c" });
addLine("volume", downBars, "#58c8c8", 1);
addLine("volume", smooth(parse(volumeMa1), 0), "#fff01a", 2.6);
addLine("volume", smooth(parse(volumeMa2), 0), "#ff00e0", 2.8);

const skdPoints = parse(skd);
addLine("skdj", smooth(skdPoints.map(([x, y]) => [x, y < 360 ? y - 5 : Math.min(y + 6, 560)]), -5), "#ffffff", 3.4);
addLine("skdj", smooth(skdPoints, 1), "#f6ec10", 3.4);

const hist = parse(macdHist);
let redBars = "", greenBars = "";
for (let x = 36; x < 3096; x += 5.8) {
  const h = valueAt(hist, x);
  const bar = "M" + x.toFixed(1) + ",1103v" + (-h).toFixed(1) + "h6V1103Z";
  if (h > 0) redBars += bar;
  else greenBars += bar;
}
addPath("macd", redBars, { fill: "#d81c1c" });
addPath("macd", greenBars, { fill: "#069a08" });
addLine("macd", smooth(parse(dif), 0), "#ffffff", 2.4);
addLine("macd", smooth(parse(dea), 0), "#f6ec10", 2.4);
```
